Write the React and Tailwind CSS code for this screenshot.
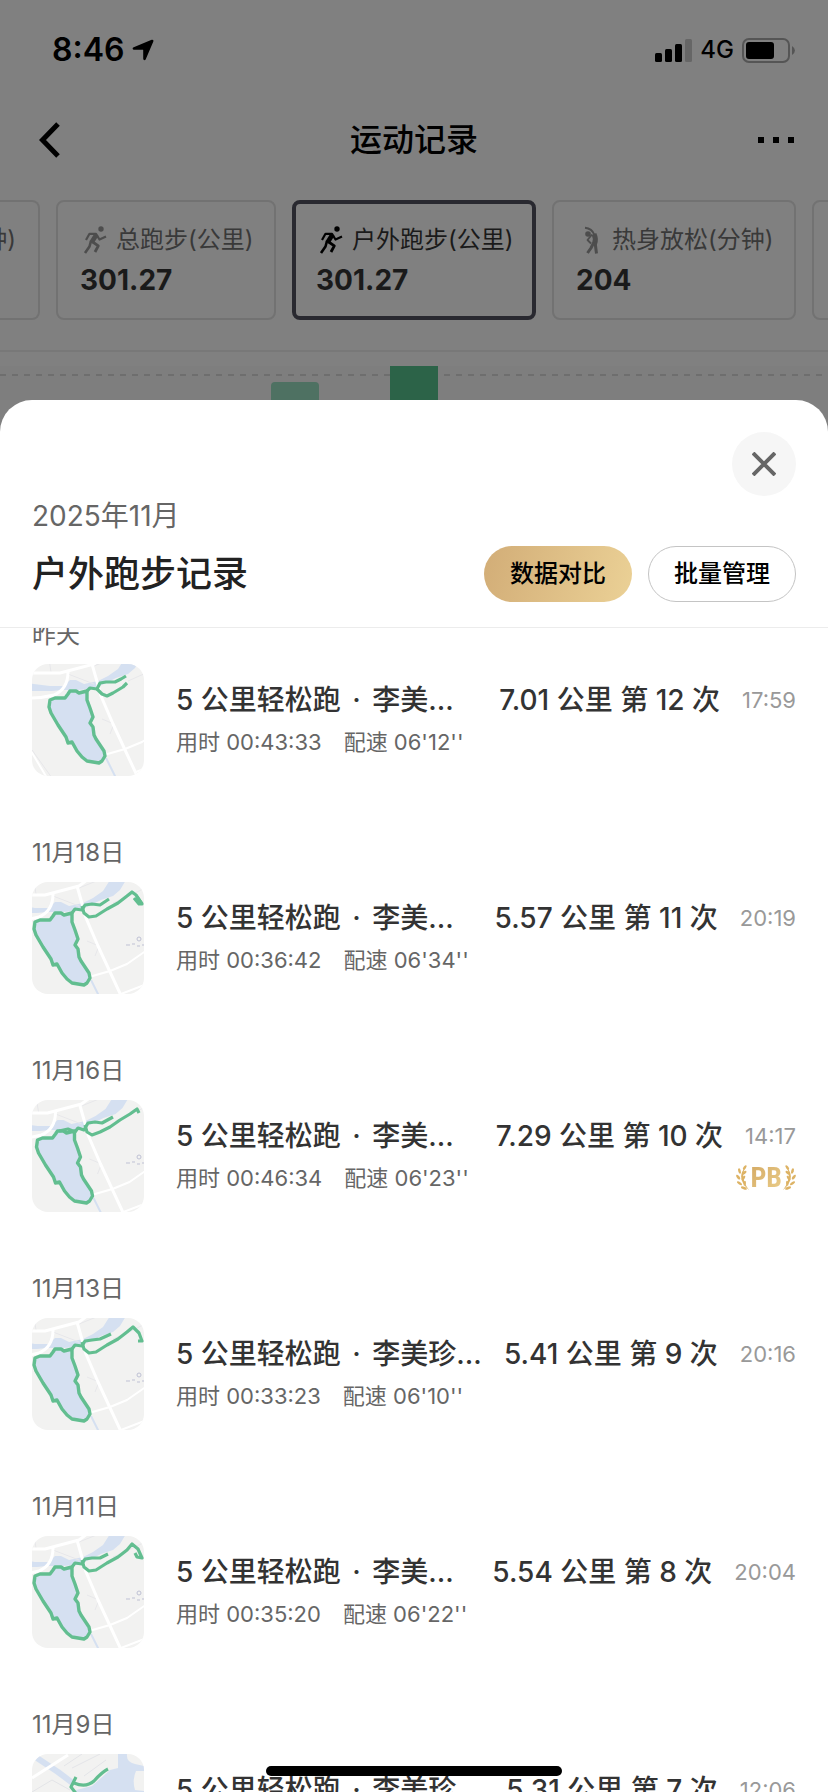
const RunnerIcon = ({ className }) => (
  <svg viewBox="0 0 28 28" className={className} fill="none" stroke="currentColor" strokeLinejoin="round" aria-hidden="true">
    <circle cx="21" cy="3" r="2.7" fill="currentColor" stroke="none" />
    <path d="M6 14 L9.5 7.8 L16 7.8 L19.5 13.5 L26 10.5" strokeWidth="2.2" />
    <path d="M16.5 8.5 L11.5 16.5" strokeWidth="4.6" />
    <path d="M11 15 L9.5 20.5 L5 27" strokeWidth="2.6" />
    <path d="M12 15.5 L18.3 19.8 L15 26" strokeWidth="2.8" />
  </svg>
);

const StretchIcon = ({ className }) => (
  <svg viewBox="0 0 28 28" className={className} fill="none" stroke="currentColor" strokeLinejoin="round" aria-hidden="true">
    <circle cx="12" cy="8" r="2.8" fill="currentColor" stroke="none" />
    <path d="M9 1.8 Q16 2.5 18.5 9" strokeWidth="2" />
    <path d="M18 8 Q20.5 13 18.5 18" strokeWidth="5" />
    <path d="M16 8.5 L11.5 14 L15 17.5" strokeWidth="1.8" />
    <path d="M19 16 L20.5 27.5" strokeWidth="3" />
    <path d="M17.5 17 L15 22 L11.5 27" strokeWidth="3" />
  </svg>
);

const metrics = [
  { label: '总跑步(公里)', value: '301.27', Icon: RunnerIcon, size: 'w-[220px]' },
  { label: '户外跑步(公里)', value: '301.27', Icon: RunnerIcon, size: 'w-[244px]', active: true },
  { label: '热身放松(分钟)', value: '204', Icon: StretchIcon, size: 'w-[244px]' },
];

const records = [
  { date: '昨天', coach: '李美…', distance: '7.01 公里 第 12 次', time: '17:59', used: '00:43:33', pace: "06'12''", map: 'a' },
  { date: '11月18日', coach: '李美…', distance: '5.57 公里 第 11 次', time: '20:19', used: '00:36:42', pace: "06'34''", map: 'b' },
  { date: '11月16日', coach: '李美…', distance: '7.29 公里 第 10 次', time: '14:17', used: '00:46:34', pace: "06'23''", map: 'c', pb: true },
  { date: '11月13日', coach: '李美珍…', distance: '5.41 公里 第 9 次', time: '20:16', used: '00:33:23', pace: "06'10''", map: 'd' },
  { date: '11月11日', coach: '李美…', distance: '5.54 公里 第 8 次', time: '20:04', used: '00:35:20', pace: "06'22''", map: 'e' },
  { date: '11月9日', coach: '李美珍…', distance: '5.31 公里 第 7 次', time: '12:06', map: 'f' },
];

const LAKE =
  'M18 36 L23 34 L33 34 L36 30 L38 27 L44 27 L47 29 L55 27 L55 36 L58 44 L61 53 L58 59 L61 63 L62 71 L64 75 L72 87 L73 92 L70 97 L67 99 L55 97 L50 93 L45 87 L40 78 L36 79 L34 73 L26 61 L19 49 L17 43 Z';

const maps = {
  a: {
    shift: 'translate(0 0)',
    routes: ['M55 27 L58 24 L65 25 L68 19 L74 18 L83 18 L89 15 L94 12', 'M65 25 L70 30 L75 32 L81 29 L86 26 L91 23 L95 19'],
  },
  b: {
    shift: 'translate(-15 4)',
    poi: true,
    routes: [
      'M40 31 L43 27 L50 28 L53 23 L60 22 L68 23 L77 17',
      'M50 24 L52 31 L57 35 L64 34 L75 27 L86 21 L95 14 L100 10 L104 13 L110 22',
      'M102 16 L107 22 L110 22 L105 15',
    ],
  },
  c: {
    shift: 'translate(-12.5 4)',
    poi: true,
    routes: [
      'M27 31 L36 29 L43 32 L46 28 L52 30 L56 23 L63 22 L70 23 L81 17',
      'M53 25 L55 32 L60 35 L68 32 L78 27 L88 20 L98 14 L105 9 L107 13',
    ],
  },
  d: {
    shift: 'translate(-15 4)',
    poi: true,
    routes: [
      'M40 31 L43 27 L50 28 L53 23 L60 22 L68 21 L79 16',
      'M50 24 L52 31 L57 35 L64 34 L75 27 L86 21 L95 14 L101 9 L107 15 L110 23 L106 23',
    ],
  },
  e: {
    shift: 'translate(-15 4)',
    poi: true,
    routes: [
      'M40 31 L43 27 L50 28 L53 23 L60 22 L68 22 L76 18',
      'M50 24 L52 31 L57 35 L64 34 L75 27 L86 21 L95 14 L100 8 L106 13 L110 22 L105 21 L103 17',
    ],
  },
};

function LakeMap({ shift, routes, poi }) {
  return (
    <>
      <g transform={shift} fill="none" strokeLinejoin="round">
        <path
          d="M-5 19 L18 22 L32 22 L38 16 L44 16 L52 20 L66 17 L76 12 L86 5 L93 -6 L109 -6 L103 4 L96 10 L84 14 L72 20 L60 25 L45 26 L30 26 L20 27 L0 27 Z"
          fill="#d5e0f1"
        />
        <path d="M17 -5 L19 8 M36 10 L62 20 M62 2 L82 -6 M96 17 L114 9 L128 2 M78 70 L82 60 L70 55" stroke="#e7e7ea" strokeWidth="1" />
        <path d="M0 9 L28 9 L62 0 L70 -6" stroke="#fff" strokeWidth="3" />
        <path d="M36 8 Q36 25 22 31 Q10 34 -2 34" stroke="#fff" strokeWidth="3" />
        <path d="M60 0 L64 14 L69 32 L81 60 L107 116" stroke="#fff" strokeWidth="3" />
        <path d="M72 91 L93 85 L110 78 L130 64 M104 108 L130 98 M-4 82 L15 114" stroke="#fff" strokeWidth="2" />
        <path d="M0 86 L20 114" stroke="#e7e7ea" strokeWidth="1" />
        <path d="M74 94 L84 114" stroke="#d5e0f1" strokeWidth="2" />
        <path d={LAKE} fill="#d5e0f1" stroke="#62be90" strokeWidth="3.4" />
      </g>
      {poi && (
        <g stroke="#bfc1d4" strokeWidth="1" fill="none">
          <circle cx="107" cy="57" r="2" />
          <path d="M94 63 h4 M100 62 h3 M105 64 h3 M110 63 h2" />
        </g>
      )}
      {routes.map((d) => (
        <path key={d} d={d} fill="none" stroke="#62be90" strokeWidth="3.2" strokeLinejoin="round" />
      ))}
    </>
  );
}

function BayMap() {
  return (
    <g fill="none" strokeLinejoin="round">
      <path d="M86 0 L95 0 Q94 8 103 10 L112 12 L112 17 L104 17 Q100 26 103 36 L112 37 L112 112 L60 112 L44 36 L60 32 L78 16 L86 14 Z" fill="#d5e0f1" />
      <path d="M5 4 L26 18 L42 30" stroke="#d5e0f1" strokeWidth="6" />
      <path d="M0 24 L36 1" stroke="#fff" strokeWidth="3" />
      <path d="M40 14 L68 0 M32 12 L50 0 M52 22 L74 6 M0 38 L20 26 L38 36" stroke="#e3e4e8" strokeWidth="1" />
      <path d="M44 23 L39 33 L46 42 M42 29 Q54 34 62 27 Q70 18 76 15" stroke="#62be90" strokeWidth="3.2" />
    </g>
  );
}

function Thumb({ map }) {
  return (
    <svg viewBox="0 0 112 112" className="size-28 shrink-0 rounded-2xl bg-[#f2f2f1]" role="img" aria-label="轨迹">
      {map === 'f' ? <BayMap /> : <LakeMap {...maps[map]} />}
    </svg>
  );
}

function Laurel({ className }) {
  return (
    <svg viewBox="0 0 16 30" className={className} fill="#ddb365" aria-hidden="true">
      <path d="M11 2 Q-1 15 15 29 Q4 15 11 2" />
      <ellipse cx="10" cy="3" rx="1.5" ry="3" transform="rotate(35 10 3)" />
      <ellipse cx="4" cy="7" rx="1.5" ry="3.2" transform="rotate(-15 4 7)" />
      <ellipse cx="9.5" cy="9" rx="1.5" ry="3" transform="rotate(50 9.5 9)" />
      <ellipse cx="2.5" cy="14" rx="1.5" ry="3.2" transform="rotate(-35 2.5 14)" />
      <ellipse cx="8.5" cy="15" rx="1.5" ry="3" transform="rotate(35 8.5 15)" />
      <ellipse cx="4" cy="21" rx="1.5" ry="3.4" transform="rotate(-55 4 21)" />
      <ellipse cx="10" cy="21" rx="1.4" ry="3" transform="rotate(5 10 21)" />
      <ellipse cx="9" cy="26.5" rx="1.5" ry="3.6" transform="rotate(-70 9 26.5)" />
    </svg>
  );
}

function Record({ date, coach, distance, time, used, pace, map, pb }) {
  return (
    <li className="pb-[60px]">
      <p className="mb-3 text-2xl leading-[34px] text-[#666]">{date}</p>
      <div className="flex gap-8">
        <Thumb map={map} />
        <div className="min-w-0 flex-1 pt-4">
          <div className="flex items-center whitespace-nowrap leading-10">
            <h2 className="min-w-0 flex-1 text-[28px] font-medium text-[#333]">
              5 公里轻松跑 <span className="mx-1">·</span> {coach}
            </h2>
            <span className="mr-[22px] text-[28px] font-medium text-[#333]">{distance}</span>
            <time className="text-[22px] text-[#999]">{time}</time>
          </div>
          {used && (
            <div className="mt-[6px] flex h-8 items-center justify-between text-[22px] leading-8 text-[#666]">
              <p className="flex gap-[22px]">
                <span>用时 {used}</span>
                <span>配速 {pace}</span>
              </p>
              {pb && (
                <span className="flex items-center">
                  <Laurel className="h-7 w-[14px]" />
                  <b className="bg-linear-to-br from-[#d3a862] to-[#ecd08c] bg-clip-text text-[28px] leading-8 font-bold text-transparent [font-family:'Liberation_Sans_Narrow','Roboto_Condensed','Roboto',sans-serif]">
                    PB
                  </b>
                  <Laurel className="h-7 w-[14px] -scale-x-100" />
                </span>
              )}
            </div>
          )}
        </div>
      </div>
    </li>
  );
}

export default function App() {
  return (
    <div className="relative flex h-screen flex-col overflow-hidden bg-[#808080] text-black [font-family:Inter,'Noto_Sans_CJK_SC',sans-serif]">
      <div className="flex h-[100px] shrink-0 items-center justify-between pr-8 pl-[52px]">
        <div className="flex items-center gap-2">
          <span className="text-[32px] leading-10 font-semibold">8:46</span>
          <svg viewBox="0 0 22 22" className="size-[22px]" stroke="currentColor" strokeWidth="1.6" strokeLinejoin="round" aria-hidden="true">
            <path d="M20 1.5 Q21 1.2 20.5 2.5 L13 20 Q12.3 21 12 19.5 V11 Q12 10 11 10 H2 Q0.8 9.5 2 9 Z" />
          </svg>
        </div>
        <div className="flex items-center gap-2">
          <svg viewBox="0 0 37 23" className="h-[23px] w-[37px]" aria-hidden="true">
            <rect x="0" y="14" width="7" height="9" rx="1.5" />
            <rect x="10" y="10" width="7" height="13" rx="1.5" />
            <rect x="20" y="5" width="7" height="18" rx="1.5" />
            <rect x="30" y="0" width="7" height="23" rx="1.5" fill="#666" />
          </svg>
          <span className="text-2xl leading-8 font-medium">4G</span>
          <svg viewBox="0 0 54 25" className="h-[25px] w-[54px]" aria-hidden="true">
            <rect x="1" y="1" width="46" height="23" rx="6" fill="none" stroke="#555" strokeWidth="2" />
            <rect x="4" y="4" width="28" height="17" rx="3" />
            <path d="M50 8 Q53 10 53 12.5 T50 17 Z" fill="#555" />
          </svg>
        </div>
      </div>

      <header className="grid h-20 shrink-0 grid-cols-[1fr_auto_1fr] items-center px-8">
        <button type="button" aria-label="返回" className="flex size-9 items-center justify-center justify-self-start">
          <svg viewBox="0 0 24 36" className="h-9 w-6" fill="none" stroke="currentColor" strokeWidth="5">
            <path d="M20 2 L4.5 18 L20 34" />
          </svg>
        </button>
        <h1 className="text-[32px] leading-10 font-medium">运动记录</h1>
        <button type="button" aria-label="更多" className="flex h-10 items-center gap-[9px] justify-self-end pl-4">
          <span className="size-[6px] bg-black" />
          <span className="size-[6px] bg-black" />
          <span className="mr-[2px] size-[6px] bg-black" />
        </button>
      </header>

      <div className="flex shrink-0 gap-4 overflow-hidden pt-5 pb-[30px]">
        <button type="button" className="h-[120px] w-10 shrink-0 rounded-r-lg border-2 border-l-0 border-[#727272] pr-[22px]">
          <span className="flex h-full justify-end overflow-hidden pt-[22px] text-2xl leading-8 whitespace-nowrap text-[#393939]">钟)</span>
        </button>
        {metrics.map(({ label, value, Icon, size, active }) => (
          <button
            key={label}
            type="button"
            aria-pressed={!!active}
            className={`${size} flex h-[120px] shrink-0 flex-col items-start rounded-lg whitespace-nowrap ${
              active ? 'border-4 border-[#292930] px-5 pt-5 text-[#1a1a1a]' : 'border-2 border-[#727272] px-[22px] pt-[22px] text-[#393939]'
            }`}
          >
            <span className="flex items-center gap-2 text-2xl leading-8">
              <Icon className={active ? 'size-7 text-black' : 'size-7 text-[#4d4d4d]'} />
              {label}
            </span>
            <strong className="mt-1 text-[28px] leading-10 font-bold text-[#1a1a1a]">{value}</strong>
          </button>
        ))}
        <div className="h-[120px] w-20 shrink-0 rounded-lg border-2 border-[#727272]" />
      </div>

      <svg className="h-[50px] w-full shrink-0" aria-hidden="true">
        <rect width="100%" height="2" fill="#787878" />
        <rect y="16" width="100%" height="34" fill="#7e7e7e" />
        <path d="M0 25 H4000" stroke="#6e6e6e" strokeWidth="2" strokeDasharray="6 6" />
        <rect x="271" y="32" width="48" height="30" rx="4" fill="#4e7162" />
        <rect x="390" y="16" width="48" height="34" fill="#2c6348" />
      </svg>

      <main className="flex min-h-0 flex-1 flex-col rounded-t-4xl bg-white">
        <div className="shrink-0 border-b border-[#ececec] px-8 pt-8 pb-[25px]">
          <div className="flex justify-end">
            <button type="button" aria-label="关闭" className="flex size-16 items-center justify-center rounded-full bg-[#f6f6f6]">
              <svg viewBox="0 0 24 24" className="size-6" stroke="#666" strokeWidth="4">
                <path d="M1 1 L23 23 M23 1 L1 23" />
              </svg>
            </button>
          </div>
          <p className="mt-1 text-[28px] leading-8 text-[#666]">2025年11月</p>
          <div className="mt-[14px] flex h-14 items-center gap-4">
            <h2 className="flex-1 text-4xl leading-10 font-medium text-[#222]">户外跑步记录</h2>
            <button type="button" className="h-14 w-[148px] rounded-full bg-[linear-gradient(105deg,#d2ad77,#ebd196)] text-2xl font-medium">
              数据对比
            </button>
            <button type="button" className="h-14 w-[148px] rounded-full border border-[#c4c4c4] text-2xl font-medium">
              批量管理
            </button>
          </div>
        </div>
        <div className="min-h-0 flex-1 overflow-hidden px-8">
          <ul className="-mt-[10px]">
            {records.map((record) => (
              <Record key={record.date} {...record} />
            ))}
          </ul>
        </div>
      </main>

      <div className="absolute bottom-4 left-1/2 h-[10px] w-[296px] -translate-x-1/2 rounded-full bg-black" />
    </div>
  );
}
